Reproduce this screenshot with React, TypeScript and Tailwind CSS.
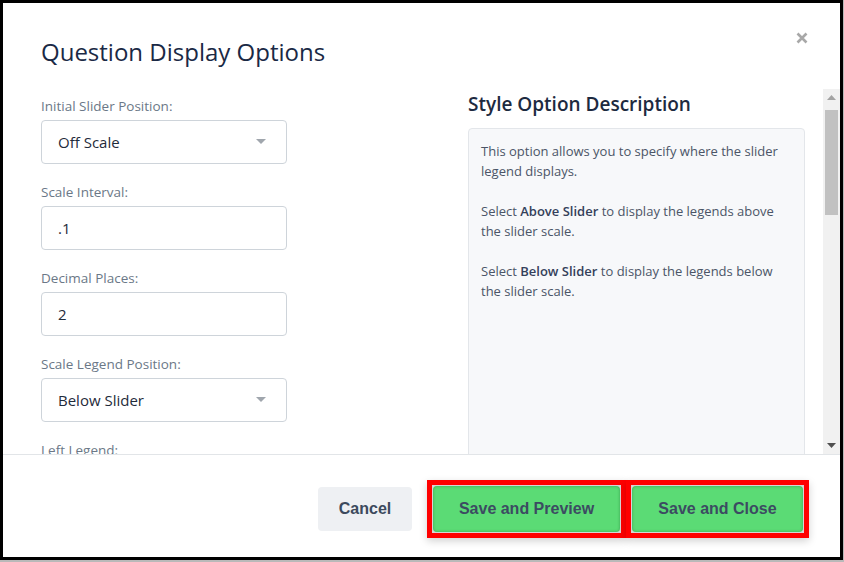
import React from 'react';

type FieldProps = {
  label: string;
  value: string;
  select?: boolean;
};

function Field({ label, value, select = false }: FieldProps) {
  return (
    <div className="mb-[18px]">
      <div className="mb-1 h-5 text-[13.5px] leading-5 text-[#6b7887]">{label}</div>
      <div className="flex h-11 items-center justify-between rounded border border-[#ced4da] bg-white pl-4 pr-5 text-[15px] text-[#1f2b3b]">
        <span>{value}</span>
        {select && (
          <svg width="10" height="6" viewBox="0 0 10 6">
            <path d="M0 0 L10 0 L5 5 Z" fill="#a0a6ad" />
          </svg>
        )}
      </div>
    </div>
  );
}

function SaveButton({ label, width }: { label: string; width: string }) {
  return (
    <div className={`${width} h-[58px] shrink-0 border-[5px] border-[#ff0000] bg-[#d6d6d6] p-px shadow-[0_3px_8px_rgba(0,0,0,0.18)]`}>
      <button className="flex h-full w-full items-center justify-center rounded bg-[#5bdb75] font-['Liberation_Sans',Arial,sans-serif] text-[16px] font-bold text-[#3c4b62] shadow-[inset_0_0_3px_rgba(0,60,20,0.35)]">
        {label}
      </button>
    </div>
  );
}

export default function App() {
  return (
    <div className="h-[562px] w-[844px] bg-[#b9b9b9] font-['Open_Sans','Noto_Sans',sans-serif]">
      <div className="flex h-[560px] w-[843px] flex-col border-[3px] border-black bg-white">
        {/* header */}
        <div className="relative h-[86px] shrink-0 pl-[38px] pt-[33px]">
          <h1 className="text-[24px] leading-8 text-[#1a2945]">Question Display Options</h1>
          <button className="absolute right-[32px] top-[29px]">
            <svg width="12" height="12" viewBox="0 0 12 12">
              <path d="M1.5 1.5 L10.5 10.5 M10.5 1.5 L1.5 10.5" stroke="#a8a8a8" strokeWidth="2.6" />
            </svg>
          </button>
        </div>

        {/* body */}
        <div className="flex h-[365px] shrink-0 overflow-hidden">
          <div className="ml-[38px] w-[246px] shrink-0 pt-[7px]">
            <Field label="Initial Slider Position:" value="Off Scale" select />
            <Field label="Scale Interval:" value=".1" />
            <Field label="Decimal Places:" value="2" />
            <Field label="Scale Legend Position:" value="Below Slider" select />
            <Field label="Left Legend:" value="" />
          </div>

          <div className="ml-[181px] flex w-[337px] shrink-0 flex-col pt-[2px]">
            <h2 className="mb-[11px] shrink-0 text-[19px] font-semibold leading-[26px] text-[#1d2a40]">
              Style Option Description
            </h2>
            <div className="h-[400px] shrink-0 rounded border border-[#e3e6ea] bg-[#f7f8fa] px-3 pt-3 text-[13px] leading-5 text-[#4b5567]">
              <p>This option allows you to specify where the slider legend displays.</p>
              <p className="mt-5">
                Select <b className="font-semibold text-[#34405a]">Above Slider</b> to display the legends above the slider scale.
              </p>
              <p className="mt-5">
                Select <b className="font-semibold text-[#34405a]">Below Slider</b> to display the legends below the slider scale.
              </p>
            </div>
          </div>

          {/* scrollbar */}
          <div className="ml-[18px] flex w-[17px] shrink-0 flex-col bg-[#f1f1f1]">
            <div className="flex h-[17px] items-center justify-center">
              <svg width="9" height="5" viewBox="0 0 9 5">
                <path d="M0 5 L9 5 L4.5 0 Z" fill="#a3a3a3" />
              </svg>
            </div>
            <div className="mx-[2px] mt-[4px] h-[105px] bg-[#c1c1c1]" />
            <div className="flex-1" />
            <div className="flex h-[17px] items-center justify-center">
              <svg width="9" height="5" viewBox="0 0 9 5">
                <path d="M0 0 L9 0 L4.5 5 Z" fill="#505050" />
              </svg>
            </div>
          </div>
        </div>

        {/* footer */}
        <div className="flex flex-1 items-start justify-end border-t border-[#e2e5e8] pr-[31px] pt-[25px]">
          <button className="mr-[15px] mt-[7px] flex h-11 w-[94px] shrink-0 items-center justify-center rounded bg-[#eef0f3] font-['Liberation_Sans',Arial,sans-serif] text-[16px] font-bold text-[#3c4a5d]">
            Cancel
          </button>
          <SaveButton label="Save and Preview" width="w-[199px]" />
          <SaveButton label="Save and Close" width="w-[183px]" />
        </div>
      </div>
    </div>
  );
}
